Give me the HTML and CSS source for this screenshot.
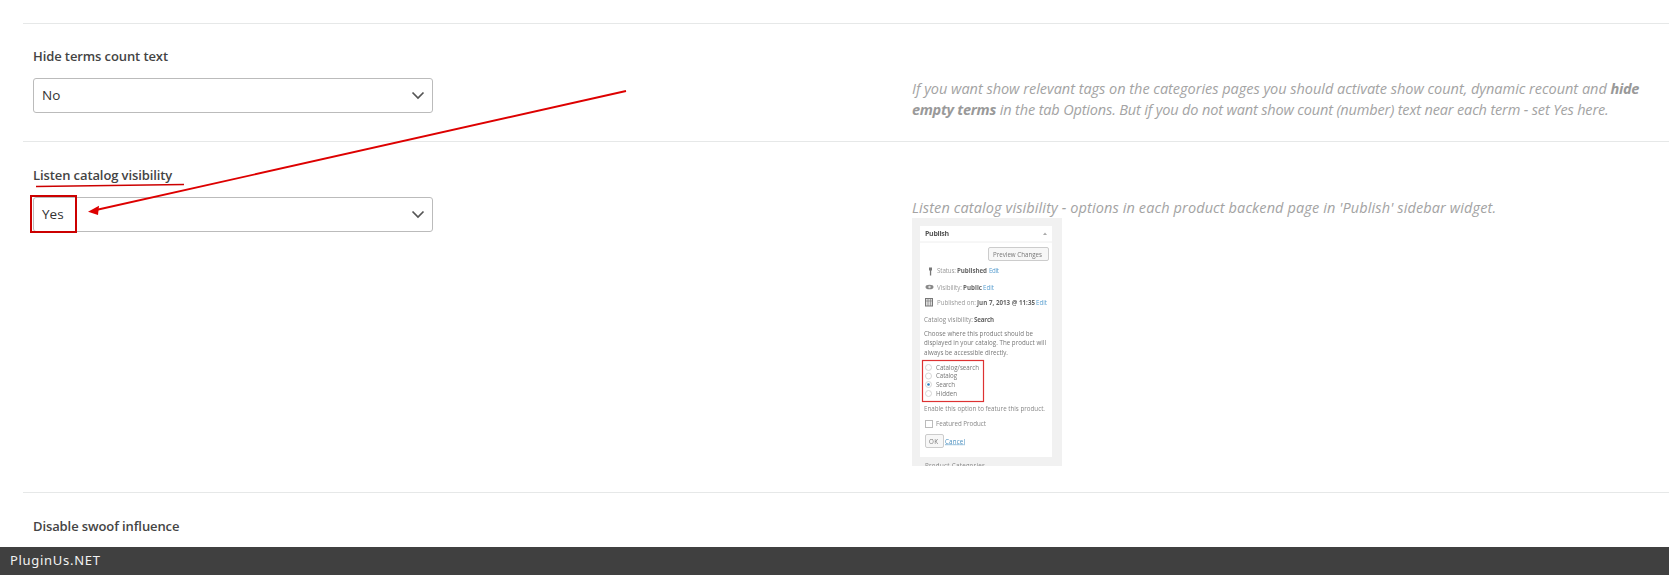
FILE: index.html
```html
<!DOCTYPE html>
<html lang="en">
<head>
<meta charset="utf-8">
<title>Settings</title>
<link rel="stylesheet" href="styles.css">
</head>
<body>
<main class="options">
  <section class="row row-a">
    <h4 class="label">Hide terms count text</h4>
    <div class="select"><span>No</span>
      <svg class="chev" width="14" height="9" viewBox="0 0 14 9"><path d="M1.5 1.5 7 7l5.5-5.5" fill="none" stroke="#555" stroke-width="1.7"/></svg>
    </div>
    <p class="desc"><span class="line-a">If you want show relevant tags on the categories pages you should activate show count, dynamic recount and</span> <b>hide empty terms</b> <span class="line-b">in the tab Options. But if you do not want show count (number) text near each term - set Yes here.</span></p>
  </section>
  <section class="row row-b">
    <h4 class="label">Listen catalog visibility</h4>
    <div class="select"><span>Yes</span>
      <svg class="chev" width="14" height="9" viewBox="0 0 14 9"><path d="M1.5 1.5 7 7l5.5-5.5" fill="none" stroke="#555" stroke-width="1.7"/></svg>
    </div>
    <div class="desc">
      <p class="desc-line">Listen catalog visibility - options in each product backend page in 'Publish' sidebar widget.</p>
      <svg class="shot" width="150" height="248" viewBox="0 0 150 248">
        <g filter="url(#soft)">
          <rect width="150" height="248" fill="#f1f1f1"/>
          <rect x="8" y="8" width="132" height="231" fill="#fff"/>
          <line x1="8" x2="140" y1="24" y2="24" stroke="#eee"/>
          <text x="13" y="17.500" textLength="24" font-size="7" font-weight="700" fill="#555">Publish</text>
          <path d="M131 17l2-2.500 2 2.500z" fill="#aaa"/>
          <rect x="76.500" y="29.500" width="60" height="13" rx="1.500" fill="#f7f7f7" stroke="#ccc"/>
          <text x="81" y="38.500" textLength="49" fill="#777">Preview Changes</text>
          <path d="M17 49.500h3v3h-.8v5h-1.300v-5H17z" fill="#777"/>
          <text x="25" y="54.500" textLength="19" fill="#999">Status:</text>
          <text x="45" y="54.500" textLength="30" font-weight="700" fill="#666">Published</text>
          <text x="77" y="54.500" textLength="10" fill="#5a9fd0">Edit</text>
          <ellipse cx="17.500" cy="69" rx="4" ry="2.300" fill="#888"/>
          <circle cx="17.500" cy="69" r="1.200" fill="#ddd"/>
          <text x="25" y="71.500" textLength="25" fill="#999">Visibility:</text>
          <text x="51" y="71.500" textLength="19" font-weight="700" fill="#666">Public</text>
          <text x="71" y="71.500" textLength="11" fill="#5a9fd0">Edit</text>
          <rect x="13.500" y="80.500" width="7" height="7.500" fill="#ddd" stroke="#777"/>
          <path d="M13.500 83h7M16 81v7M18.500 81v7" stroke="#777" stroke-width=".6"/>
          <text x="25" y="86.500" textLength="39" fill="#999">Published on:</text>
          <text x="65" y="86.500" textLength="58" font-weight="700" fill="#666">Jun 7, 2013 @ 11:35</text>
          <text x="124" y="86.500" textLength="11" fill="#5a9fd0">Edit</text>
          <text x="12" y="103.500" textLength="49" fill="#888">Catalog visibility:</text>
          <text x="62" y="103.500" textLength="20" font-weight="700" fill="#666">Search</text>
          <text x="12" y="117.500" textLength="109" fill="#777">Choose where this product should be</text>
          <text x="12" y="127" textLength="122" fill="#777">displayed in your catalog. The product will</text>
          <text x="12" y="136.500" textLength="84" fill="#777">always be accessible directly.</text>
          <rect x="10.500" y="142.500" width="61" height="41" fill="#fff" stroke="#d33" stroke-width="1.200"/>
          <g fill="#fff" stroke="#ccc" stroke-width=".8">
            <circle cx="16.500" cy="149.500" r="3"/><circle cx="16.500" cy="158" r="3"/>
            <circle cx="16.500" cy="166.500" r="3"/><circle cx="16.500" cy="175.500" r="3"/>
          </g>
          <circle cx="16.500" cy="166.500" r="1.300" fill="#2a80c0"/>
          <text x="24" y="151.500" textLength="43" fill="#777">Catalog/search</text>
          <text x="24" y="160" textLength="21" fill="#777">Catalog</text>
          <text x="24" y="168.500" textLength="19" fill="#777">Search</text>
          <text x="24" y="177.500" textLength="21" fill="#777">Hidden</text>
          <text x="12" y="192.500" textLength="121" fill="#888">Enable this option to feature this product.</text>
          <rect x="13.500" y="202.500" width="7" height="7" fill="#fff" stroke="#bbb"/>
          <text x="24" y="208" textLength="50" fill="#888">Featured Product</text>
          <rect x="13.500" y="216.500" width="18" height="13" rx="1.500" fill="#f7f7f7" stroke="#ccc"/>
          <text x="17" y="225.500" textLength="9" fill="#777">OK</text>
          <text x="33" y="225.500" textLength="20" fill="#4a90c0" text-decoration="underline">Cancel</text>
          <text x="13" y="250" textLength="60" fill="#888">Product Categories</text>
        </g>
        <defs><filter id="soft" x="0" y="0" width="100%" height="100%"><feGaussianBlur stdDeviation="0.42"/></filter></defs>
      </svg>
    </div>
  </section>
  <section class="row row-c">
    <h4 class="label">Disable swoof influence</h4>
  </section>
</main>
<svg class="marks" width="1669" height="575" viewBox="0 0 1669 575">
  <rect x="31" y="196" width="45" height="36" fill="none" stroke="#c00" stroke-width="2"/>
  <path d="M36 186.500 184 184.500" stroke="#c00" stroke-width="1.700" fill="none"/>
  <path d="M626 91 96 210" stroke="#d00" stroke-width="1.800" fill="none"/>
  <path d="M88 211.700 99 205.700 98 215z" fill="#d00"/>
</svg>
<footer class="bar">PluginUs.NET</footer>
</body>
</html>
```
FILE: styles.css
```css
html, body {
  margin: 0;
  height: 575px;
  overflow: hidden;
  background: #fff;
  font-family: "Open Sans", sans-serif;
}
.options {
  padding: 23px 0 0 23px;
}
.row {
  display: grid;
  grid-template-columns: 400px 1fr;
  column-gap: 479px;
  align-content: start;
  border-top: 1px solid #e6e8e8;
  padding: 22px 10px 0;
}
.row-a { height: 96px; padding-top: 21px; }
.row-b { height: 328px; }
.label {
  grid-column: 1 / -1;
  margin: 0 0 11px;
  font-size: 13px;
  line-height: 22px;
  font-weight: 600;
  letter-spacing: -0.1px;
  color: #444;
}
.select {
  box-sizing: border-box;
  height: 35px;
  display: flex;
  align-items: center;
  justify-content: space-between;
  padding: 0 7px 2px 8px;
  border: 1px solid #bbb;
  border-radius: 3px;
  background: #fff;
  font-size: 13.500px;
  color: #333;
}
.chev { margin-top: 2px; }
.desc {
  margin: 0;
  font-size: 14.500px;
  line-height: 21px;
  font-style: italic;
  color: #a3a3a3;
}
.desc b { font-weight: 700; color: #999; letter-spacing: -0.29px; }
.line-a { letter-spacing: -0.02px; }
.line-b { letter-spacing: -0.15px; }
.desc-line { margin: 0; letter-spacing: 0.117px; }
.shot {
  display: block;
  font-family: "Open Sans", sans-serif;
  font-size: 6.200px;
  font-style: normal;
}
.marks {
  position: absolute;
  left: 0;
  top: 0;
  pointer-events: none;
}
.bar {
  position: fixed;
  left: 0;
  right: 0;
  bottom: 0;
  height: 28px;
  box-sizing: border-box;
  padding-left: 10px;
  background: #404040;
  color: #f2f2f2;
  font-family: "Noto Sans", sans-serif;
  font-size: 13px;
  line-height: 27px;
  letter-spacing: 0.7px;
}
```
